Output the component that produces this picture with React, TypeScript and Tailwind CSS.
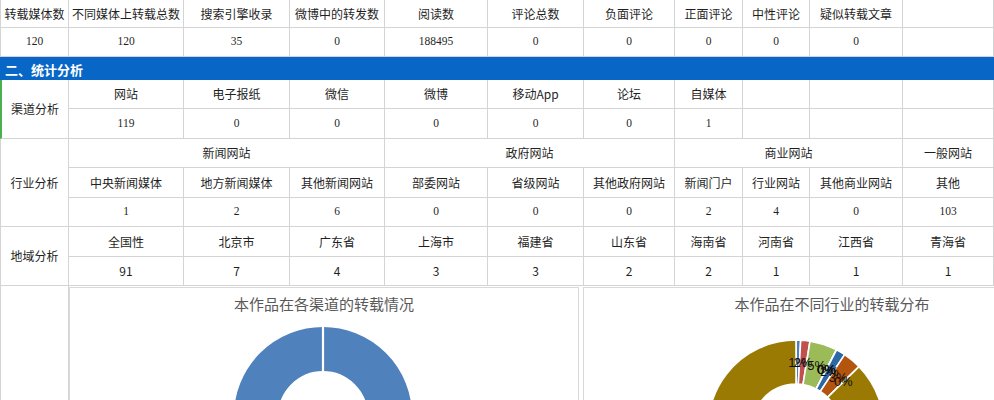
import React from "react";

const cellBase =
  "flex items-center justify-center border-r border-b border-[#d4d4d4] whitespace-nowrap text-[12px] text-[#1f1f1f] font-['Noto_Sans_CJK_SC',sans-serif]";
const serifNum =
  "flex items-center justify-center border-r border-b border-[#d4d4d4] whitespace-nowrap text-[11.5px] text-[#1f1f1f] font-['Liberation_Serif','Noto_Sans_CJK_SC',serif]";
const sansNum =
  "flex items-center justify-center border-r border-b border-[#d4d4d4] whitespace-nowrap text-[12px] text-[#1f1f1f] font-['Noto_Sans_CJK_SC',sans-serif]";

const topHeads = ["转载媒体数", "不同媒体上转载总数", "搜索引擎收录", "微博中的转发数", "阅读数", "评论总数", "负面评论", "正面评论", "中性评论", "疑似转载文章", ""];
const topVals = ["120", "120", "35", "0", "188495", "0", "0", "0", "0", "0", ""];
const chHeads = ["网站", "电子报纸", "微信", "微博", "移动App", "论坛", "自媒体", "", "", ""];
const chVals = ["119", "0", "0", "0", "0", "0", "1", "", "", ""];
const indHeads = ["中央新闻媒体", "地方新闻媒体", "其他新闻网站", "部委网站", "省级网站", "其他政府网站", "新闻门户", "行业网站", "其他商业网站", "其他"];
const indVals = ["1", "2", "6", "0", "0", "0", "2", "4", "0", "103"];
const geoHeads = ["全国性", "北京市", "广东省", "上海市", "福建省", "山东省", "海南省", "河南省", "江西省", "青海省"];
const geoVals = ["91", "7", "4", "3", "3", "2", "2", "1", "1", "1"];

function pt(cx: number, cy: number, rad: number, a: number): [number, number] {
  const t = (a * Math.PI) / 180;
  return [cx + rad * Math.sin(t), cy - rad * Math.cos(t)];
}

function slicePath(cx: number, cy: number, R: number, r: number, a0: number, a1: number) {
  const large = a1 - a0 > 180 ? 1 : 0;
  const [x0, y0] = pt(cx, cy, R, a0);
  const [x1, y1] = pt(cx, cy, R, a1);
  const [x2, y2] = pt(cx, cy, r, a1);
  const [x3, y3] = pt(cx, cy, r, a0);
  return `M${x0} ${y0} A${R} ${R} 0 ${large} 1 ${x1} ${y1} L${x2} ${y2} A${r} ${r} 0 ${large} 0 ${x3} ${y3} Z`;
}

function ChannelChart() {
  const cx = 253;
  const cy = 96;
  return (
    <div className="w-[510px] h-[130px] shrink-0 mt-px border border-[#d9d9d9] bg-white flex flex-col">
      <div className="h-[34px] flex items-center justify-center text-[15px] text-[#595959] font-['Noto_Sans_CJK_SC',sans-serif]">
        本作品在各渠道的转载情况
      </div>
      <svg width="508" height="100" className="block">
        <circle cx={cx} cy={cy} r={67} fill="none" stroke="#4f81bd" strokeWidth={44} />
        <line x1={cx} y1={cy - 90} x2={cx} y2={cy - 44} stroke="#ffffff" strokeWidth={2.2} />
      </svg>
    </div>
  );
}

function IndustryChart() {
  const cx = 212;
  const cy = 108;
  const R = 88;
  const r = 44;
  const vals = [1, 2, 6, 0, 0, 0, 2, 4, 0, 103];
  const colors = ["#4f81bd", "#c0504d", "#9bbb59", "#8064a2", "#4bacc6", "#f79646", "#2a68a6", "#b4550f", "#5f7530", "#9b7a04"];
  const labels = ["1%", "2%", "5%", "0%", "0%", "0%", "2%", "3%", "0%", "87%"];
  const total = vals.reduce((s, v) => s + v, 0);
  let acc = 0;
  const slices = vals.map((v, i) => {
    const a0 = (acc / total) * 360;
    acc += v;
    const a1 = (acc / total) * 360;
    return { a0, a1, v, color: colors[i], label: labels[i] };
  });
  return (
    <div className="w-[498px] h-[130px] shrink-0 ml-[4px] mt-px border border-[#d9d9d9] bg-white flex flex-col">
      <div className="h-[34px] flex items-center justify-center text-[15px] text-[#595959] font-['Noto_Sans_CJK_SC',sans-serif]">
        本作品在不同行业的转载分布
      </div>
      <svg width="496" height="100" className="block">
        {slices.map((s, i) =>
          s.v > 0 ? (
            <path key={i} d={slicePath(cx, cy, R, r, s.a0, s.a1)} fill={s.color} stroke="#ffffff" strokeWidth={1.6} />
          ) : (
            <line
              key={i}
              x1={pt(cx, cy, r, s.a0)[0]}
              y1={pt(cx, cy, r, s.a0)[1]}
              x2={pt(cx, cy, R, s.a0)[0]}
              y2={pt(cx, cy, R, s.a0)[1]}
              stroke="#ffffff"
              strokeWidth={1.6}
            />
          )
        )}
        {slices.map((s, i) => {
          const [lx, ly] = pt(cx, cy, (R + r) / 2, (s.a0 + s.a1) / 2);
          if (ly > 90) return null;
          return (
            <text
              key={"t" + i}
              x={lx}
              y={ly + 4.5}
              textAnchor="middle"
              fontSize={13}
              fill="#111111"
              fontFamily="'Liberation Sans', Arial, sans-serif"
            >
              {s.label}
            </text>
          );
        })}
      </svg>
    </div>
  );
}

export default function App() {
  return (
    <div className="w-[994px] h-[400px] overflow-hidden bg-white">
      <div className="grid grid-cols-[69px_115px_106px_95px_103px_96px_91px_68px_67px_93px_91px] grid-rows-[28px_29px_23px_29px_30px_29px_30px_29px_30px_29px_114px]">
        {topHeads.map((t, i) => (
          <div key={"h" + i} className={i === 0 ? cellBase + " border-l" : cellBase}>
            {t}
          </div>
        ))}
        {topVals.map((t, i) => (
          <div key={"v" + i} className={i === 0 ? serifNum + " border-l" : serifNum}>
            {t}
          </div>
        ))}
        <div className="col-span-11 bg-[#0866c6] flex items-center pl-[5px] pt-[2px] text-white text-[13px] font-bold font-['Noto_Sans_CJK_SC',sans-serif]">
          二、统计分析
        </div>
        <div className={cellBase + " row-span-2 border-l-2 border-l-[#4caf50]"}>渠道分析</div>
        {chHeads.map((t, i) => (
          <div key={"ch" + i} className={cellBase}>
            {t}
          </div>
        ))}
        {chVals.map((t, i) => (
          <div key={"cv" + i} className={serifNum}>
            {t}
          </div>
        ))}
        <div className={cellBase + " row-span-3 border-l"}>行业分析</div>
        <div className={cellBase + " col-span-3"}>新闻网站</div>
        <div className={cellBase + " col-span-3"}>政府网站</div>
        <div className={cellBase + " col-span-3"}>商业网站</div>
        <div className={cellBase}>一般网站</div>
        {indHeads.map((t, i) => (
          <div key={"ih" + i} className={cellBase}>
            {t}
          </div>
        ))}
        {indVals.map((t, i) => (
          <div key={"iv" + i} className={serifNum}>
            {t}
          </div>
        ))}
        <div className={cellBase + " row-span-2 border-l"}>地域分析</div>
        {geoHeads.map((t, i) => (
          <div key={"gh" + i} className={cellBase}>
            {t}
          </div>
        ))}
        {geoVals.map((t, i) => (
          <div key={"gv" + i} className={sansNum}>
            {t}
          </div>
        ))}
        <div className="border-l border-r border-[#d4d4d4]"></div>
        <div className="col-span-10 flex items-start overflow-hidden min-w-0">
          <ChannelChart />
          <IndustryChart />
        </div>
      </div>
    </div>
  );
}
